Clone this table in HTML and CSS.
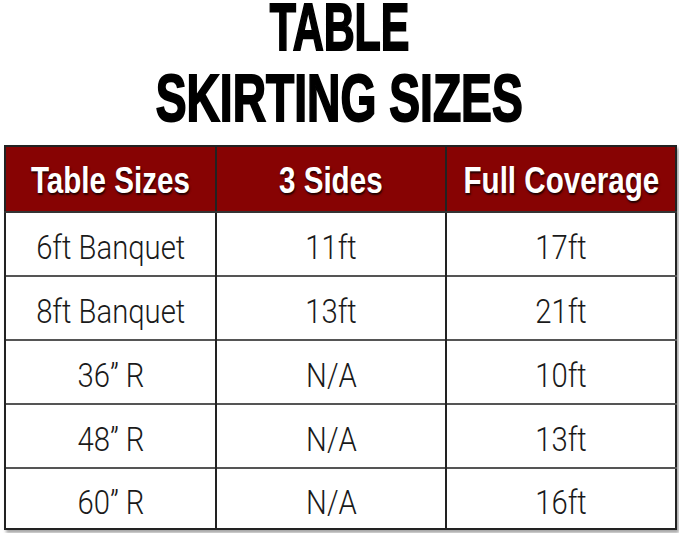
FILE: index.html
```html
<!DOCTYPE html>
<html>
<head>
<meta charset="utf-8">
<link rel="stylesheet" href="styles.css">
</head>
<body>
<h1 class="title">
  <span class="title-line title-line--short">TABLE</span>
  <span class="title-line title-line--long">SKIRTING SIZES</span>
</h1>
<table class="sizes">
  <colgroup>
    <col class="col-a"><col class="col-b"><col class="col-c">
  </colgroup>
  <thead>
    <tr class="head-row">
      <th><div class="hd-wrap"><span class="hd">Table Sizes</span></div></th>
      <th><div class="hd-wrap"><span class="hd">3 Sides</span></div></th>
      <th><div class="hd-wrap"><span class="hd">Full Coverage</span></div></th>
    </tr>
  </thead>
  <tbody>
    <tr><td><span class="cell">6ft Banquet</span></td><td><span class="cell">11ft</span></td><td><span class="cell">17ft</span></td></tr>
    <tr><td><span class="cell">8ft Banquet</span></td><td><span class="cell">13ft</span></td><td><span class="cell">21ft</span></td></tr>
    <tr><td><span class="cell">36” R</span></td><td><span class="cell">N/A</span></td><td><span class="cell">10ft</span></td></tr>
    <tr><td><span class="cell">48” R</span></td><td><span class="cell">N/A</span></td><td><span class="cell">13ft</span></td></tr>
    <tr class="last-row"><td><span class="cell">60” R</span></td><td><span class="cell">N/A</span></td><td><span class="cell">16ft</span></td></tr>
  </tbody>
</table>
</body>
</html>
```

FILE: styles.css
```css
html, body {
  margin: 0;
  padding: 0;
  background: #ffffff;
}

body {
  width: 679px;
  height: 533px;
  overflow: hidden;
}

.title {
  margin: 0;
  padding: 0;
  display: flex;
  flex-direction: column;
  align-items: center;
  font-family: "Liberation Sans", Arial, sans-serif;
  font-weight: 700;
  font-size: 66px;
  color: #000;
  -webkit-text-stroke: 2px #000;
}

.title-line {
  display: block;
  white-space: nowrap;
}

.title-line--short {
  line-height: 55px;
  transform: scaleX(0.65);
}

.title-line--long {
  line-height: 86px;
  transform: scaleX(0.70);
}

.sizes {
  margin: 4px 0 0 4px;
  width: 671px;
  border-collapse: collapse;
  table-layout: fixed;
  border: 2px solid #222;
  box-shadow: 2px 3px 3px rgba(0, 0, 0, 0.35);
}

.col-a { width: 211px; }
.col-b { width: 230px; }
.col-c { width: 230px; }

.head-row th {
  height: 64px;
  padding: 0;
  background: #870303;
  border-left: 2px solid #222;
  border-bottom: 2px solid #333;
  vertical-align: middle;
}

.hd-wrap {
  display: flex;
  justify-content: center;
  align-items: center;
}

.hd {
  flex: none;
  font-family: "Liberation Sans", Arial, sans-serif;
  font-weight: 700;
  font-size: 37px;
  color: #ffffff;
  white-space: nowrap;
  transform: scaleX(0.8);
  text-shadow: 1px 2px 2px rgba(0, 0, 0, 0.75);
  position: relative;
  top: 2px;
}

td {
  height: 62px;
  padding: 0;
  border-left: 2px solid #222;
  border-top: 2px solid #555;
  text-align: center;
  vertical-align: middle;
}

.last-row td {
  height: 59px;
}

.cell {
  display: inline-block;
  font-family: Roboto, "Liberation Sans", sans-serif;
  font-weight: 300;
  font-size: 34px;
  color: #1a1a1a;
  white-space: nowrap;
  transform: scaleX(0.86);
  position: relative;
  top: 3px;
}
```
